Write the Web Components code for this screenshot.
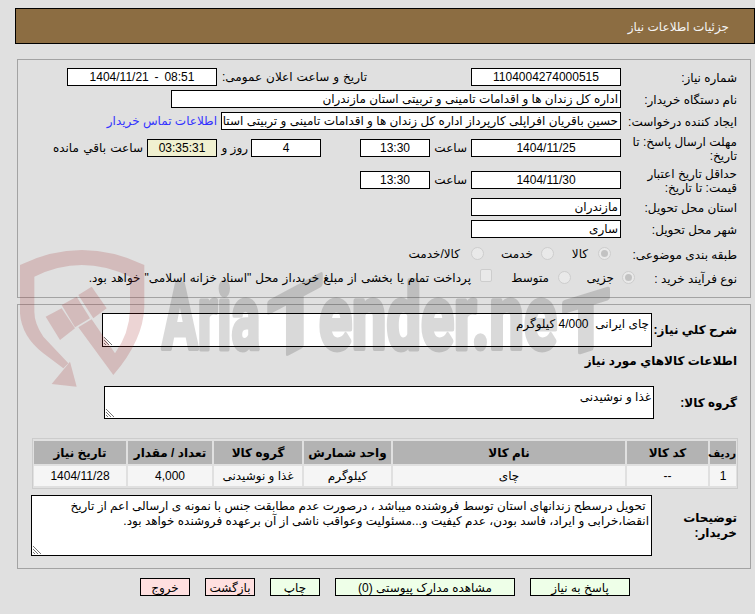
<!DOCTYPE html>
<html lang="fa"><head><meta charset="utf-8"><title>جزئیات اطلاعات نیاز</title>
<style>
html,body{margin:0;padding:0;background:#e0e0e0;}
body{width:755px;height:614px;overflow:hidden;font:12px/14px "Liberation Sans","DejaVu Sans",sans-serif;color:#000;}
.t{display:block;white-space:nowrap;flex:none;}
</style></head><body>
<page-title>جزئیات اطلاعات نیاز</page-title>

<form-panel style="margin-top:15px;padding:8px 0 10px;">
  <field-row label="شماره نیاز:">
    <val-box style="width:150px">1104004274000515</val-box>
    <span class="t" style="margin-right:104px;width:150px;word-spacing:.7px">تاریخ و ساعت اعلان عمومی:</span>
    <val-box style="width:150px;word-spacing:2.5px" dir="ltr">1404/11/21 - 08:51</val-box>
  </field-row>
  <field-row label="نام دستگاه خریدار:" style="margin-top:4px">
    <val-box start style="width:450px">اداره کل زندان ها و اقدامات تامینی و تربیتی استان مازندران</val-box>
  </field-row>
  <field-row label="ایجاد کننده درخواست:" style="margin-top:4px">
    <val-box start style="width:400px">حسین باقریان افراپلی کارپرداز اداره کل زندان ها و اقدامات تامینی و تربیتی استان مازندران</val-box>
    <span class="t" style="margin-right:4px;color:#33f">اطلاعات تماس خریدار</span>
  </field-row>
  <field-row label="مهلت ارسال پاسخ: تا تاریخ:" tall style="margin-top:6px">
    <val-box style="width:150px">1404/11/25</val-box>
    <span class="t" style="width:37px;margin-right:4px">ساعت</span>
    <val-box style="width:70px">13:30</val-box>
    <span style="width:39px" class="t"></span>
    <val-box style="width:70px">4</val-box>
    <span class="t" style="width:26px;margin-right:3px">روز و</span>
    <val-box style="width:70px;background:#f0f0d0;margin-right:5px">03:35:31</val-box>
    <span class="t" style="margin-right:4px;word-spacing:1px">ساعت باقي مانده</span>
  </field-row>
  <field-row label="حداقل تاریخ اعتبار قیمت: تا تاریخ:" tall style="margin-top:4px">
    <val-box style="width:150px">1404/11/30</val-box>
    <span class="t" style="width:37px;margin-right:4px">ساعت</span>
    <val-box style="width:70px">13:30</val-box>
  </field-row>
  <field-row label="استان محل تحویل:" style="margin-top:2px">
    <val-box start style="width:150px">مازندران</val-box>
  </field-row>
  <field-row label="شهر محل تحویل:" style="margin-top:4px">
    <val-box start style="width:150px">ساری</val-box>
  </field-row>
  <field-row label="طبقه بندی موضوعی:" style="margin-top:7px">
    <radio-mark checked style="margin-right:10px"></radio-mark>
    <span class="t" style="margin-right:10px;width:16px">کالا</span>
    <radio-mark style="margin-right:18px"></radio-mark>
    <span class="t" style="margin-right:8px;width:32px">خدمت</span>
    <radio-mark style="margin-right:17px"></radio-mark>
    <span class="t" style="margin-right:11px">کالا/خدمت</span>
  </field-row>
  <field-row label="نوع فرآیند خرید :" style="margin-top:6px;--lw:102px">
    <radio-mark checked></radio-mark>
    <span class="t" style="margin-right:8px;width:28px">جزیی</span>
    <radio-mark style="margin-right:15px"></radio-mark>
    <span class="t" style="margin-right:9px;width:36px">متوسط</span>
    <check-mark style="margin-right:21px"></check-mark>
    <span class="t" style="margin-right:9px;word-spacing:.7px">پرداخت تمام یا بخشی از مبلغ خرید،از محل "اسناد خزانه اسلامی" خواهد بود.</span>
  </field-row>
</form-panel>

<form-panel style="margin-top:6px;padding:8px 0 12px;">
  <field-row strong nowrap label="شرح کلي نياز:" style="--lw:85px;height:34px;align-items:center">
    <note-box style="width:550px;height:34px">چای ایرانی&nbsp; 4/000 کیلوگرم</note-box>
  </field-row>
  <section-head style="margin-top:7px">اطلاعات کالاهاي مورد نياز</section-head>
  <field-row strong nowrap label="گروه کالا:" style="--lw:83px;height:33px;margin-top:17px">
    <note-box style="width:550px;height:33px">غذا و نوشیدنی</note-box>
  </field-row>
  <goods-table style="margin-top:19px"></goods-table>
  <field-row strong label="توضیحات خریدار:" style="--lw:85px;height:61px;margin-top:6px">
    <note-box style="width:621px;height:61px">&nbsp;تحویل درسطح زندانهای استان توسط فروشنده میباشد ، درصورت عدم مطابقت جنس با نمونه ی ارسالی اعم از تاریخ انقضا،خرابی و ایراد، فاسد بودن، عدم کیفیت و...مسئولیت وعواقب ناشی از آن برعهده فروشنده خواهد بود.</note-box>
  </field-row>
</form-panel>

<action-bar>
  <action-button style="width:100px">پاسخ به نیاز</action-button>
  <action-button style="width:180px">مشاهده مدارک پیوستی (0)</action-button>
  <action-button style="width:50px">چاپ</action-button>
  <action-button danger style="width:50px">بازگشت</action-button>
  <action-button danger style="width:50px">خروج</action-button>
</action-bar>

<water-mark></water-mark>

<script>
function def(name, css, html, extra){
  customElements.define(name, class extends HTMLElement{
    constructor(){super();const r=this.attachShadow({mode:'open'});
      r.innerHTML='<style>'+css+'</style>'+html;}
    connectedCallback(){
      if(extra)extra(this);
    }
  });
}
def('page-title',
 ':host{display:flex;direction:rtl;align-items:center;box-sizing:border-box;margin:8px 0 0 15px;width:740px;height:36px;border:1px solid #000;background:#8c6d42;color:#f4f4f4;padding:1px 25px 0 0;}',
 '<slot></slot>');
def('form-panel',
 ':host{display:block;direction:rtl;box-sizing:border-box;margin-left:17px;width:734px;border:1px solid #a3a3a3;}',
 '<slot></slot>');
def('field-row',
 ':host{display:flex;align-items:flex-start;direction:rtl;height:18px;padding-right:13px;}'+
 ':host([tall]){height:28px;}'+
 '.l{flex:none;width:var(--lw,116px);box-sizing:border-box;padding-top:3px;line-height:14px;}'+
 ':host([tall]) .l{padding-top:0;line-height:13.5px;}'+
 '.v{display:flex;align-items:center;height:18px;}'+
 ':host([tall]) .v{margin-top:3px;}'+
 ':host([strong]) .l{font-weight:bold;align-self:center;padding-top:1px;line-height:15px;}'+
 ':host([nowrap]) .l{white-space:nowrap;}'+
 ':host([strong]) .v{height:auto;align-items:flex-start;}',
 '<div class="l"></div><div class="v"><slot></slot></div>',
 el=>{el.shadowRoot.querySelector('.l').textContent=el.getAttribute('label');});
def('val-box',
 ':host{display:block;flex:none;box-sizing:border-box;height:18px;border:1px solid #000;background:#fff;text-align:center;line-height:16px;white-space:nowrap;overflow:hidden;}'+
 ':host([start]){text-align:right;padding-right:2px;}',
 '<slot></slot>');
def('radio-mark',
 ':host{display:block;flex:none;box-sizing:border-box;width:13px;height:13px;margin-top:-1px;border-radius:50%;border:1.5px solid #cdcdcd;background:#e9e9e9;position:relative;}'+
 ':host([checked])::after{content:"";position:absolute;left:1.5px;top:1.5px;width:7px;height:7px;border-radius:50%;background:#c2c2c2;}',
 '');
def('check-mark',
 ':host{display:block;flex:none;box-sizing:border-box;width:12px;height:13px;border-radius:2px;border:1.5px solid #cdcdcd;background:#e9e9e9;margin-top:-5px;}',
 '');
def('note-box',
 ':host{display:block;flex:none;box-sizing:border-box;border:1px solid #000;background:#fff;padding:3px 2px 0;position:relative;line-height:15px;}'+
 'svg{position:absolute;left:1px;bottom:1px;}',
 '<slot></slot><svg width="9" height="9" viewBox="0 0 9 9"><path d="M0 1l8 8M0 4l5 5M0 7l2 2" stroke="#777" stroke-width="1" fill="none"/></svg>');
def('section-head',
 ':host{display:block;direction:rtl;font-weight:bold;padding-right:13px;height:15px;line-height:15px;}',
 '<slot></slot>');
def('goods-table',
 ':host{display:block;direction:rtl;box-sizing:border-box;margin-right:12px;width:706px;padding:1px 0;box-shadow:inset 0 0 0 1px #ccc;}'+
 'table{border-collapse:separate;border-spacing:2px;table-layout:fixed;width:706px;direction:rtl;}'+
 'th,td{padding:0;text-align:center;white-space:nowrap;}'+
 'th{background:#b3b3b3;height:23px;font-weight:bold;}'+
 'th.n{font-size:10.5px;}'+
 'td{background:#f5f5f5;height:20px;}',
 '<table><colgroup><col style="width:26px"><col style="width:81px"><col style="width:232px"><col style="width:87px"><col style="width:88px"><col style="width:84px"><col style="width:92px"></colgroup>'+
 '<tr><th class="n">ردیف</th><th>کد کالا</th><th>نام کالا</th><th>واحد شمارش</th><th>گروه کالا</th><th>تعداد / مقدار</th><th>تاریخ نیاز</th></tr>'+
 '<tr><td>1</td><td>--</td><td>چای</td><td>کیلوگرم</td><td>غذا و نوشیدنی</td><td>4,000</td><td>1404/11/28</td></tr></table>');
def('action-bar',
 ':host{display:flex;direction:rtl;gap:15px;margin-top:9px;padding-right:125px;}',
 '<slot></slot>');
def('action-button',
 ':host{display:block;flex:none;box-sizing:border-box;height:18px;border:1px solid #000;background:#eeffe8;text-align:center;line-height:18px;white-space:nowrap;}'+
 ':host([danger]){background:#ffe0e0;}',
 '<slot></slot>');
def('water-mark',
 ':host{position:fixed;left:0;top:0;width:755px;height:614px;pointer-events:none;z-index:5;}svg{display:block;}',
 `<svg width="755" height="614" viewBox="0 0 755 614">
  <g transform="translate(10 240) scale(.33333)" fill="rgba(160,40,40,.2)">
   <path d="M30 75Q215 -15 403 75L403 200Q400 300 310 405L205 262L245 238L315 340Q358 280 360 210L360 110Q215 40 73 110L73 215Q73 250 100 290L175 370L160 385L100 340Q35 290 30 220Z"/>
   <path d="M180 365L200 440L125 432Z"/>
   <path d="M107 230L155 205L195 265L150 300Z"/>
   <path d="M155 195L200 170L240 235L195 262Z"/>
   <path d="M205 165L245 140L290 205L250 235Z"/>
  </g>
  <g opacity=".15" fill="#000" stroke="#000" stroke-width="5" stroke-linejoin="round" font-family="Roboto,'Liberation Sans',sans-serif" font-weight="700" font-size="90">
   <text x="162" y="349" textLength="98" lengthAdjust="spacingAndGlyphs">Aria</text>
   <text transform="translate(268 364) skewY(-28)" font-size="86" textLength="54" lengthAdjust="spacingAndGlyphs">T</text>
   <text x="319" y="349" textLength="238" lengthAdjust="spacingAndGlyphs">ender.ne</text>
   <text transform="translate(563 357) skewY(-17)" font-size="76" textLength="46" lengthAdjust="spacingAndGlyphs">T</text>
  </g>
 </svg>`);
</script>
</body></html>
